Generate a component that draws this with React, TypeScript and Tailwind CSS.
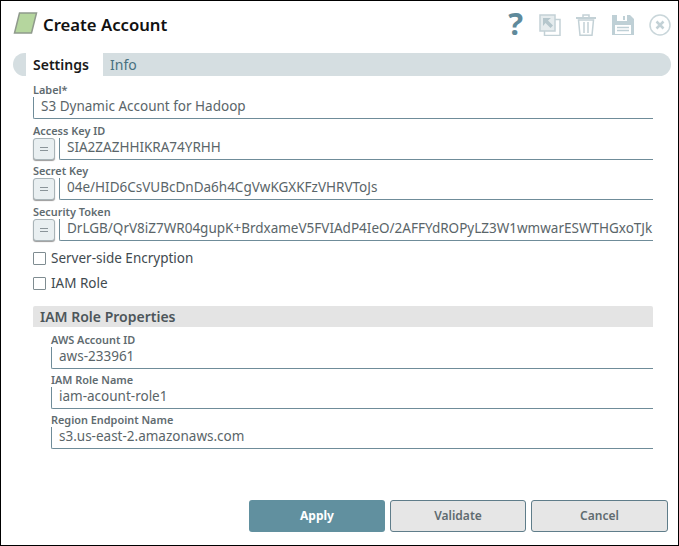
import type { ReactNode } from 'react';

const FONT = "font-['Noto_Sans','Open_Sans',sans-serif]";

function ExprButton() {
  return (
    <div className="mr-[4px] flex h-[22px] w-[22px] shrink-0 items-center justify-center rounded-[3px] border border-[#a9b4b8] bg-[#e9eff1] shadow-[0_1px_1px_#999]">
      <span className="flex flex-col gap-[2px]">
        <span className="block h-[1px] w-[8px] bg-[#8a9499]" />
        <span className="block h-[1px] w-[8px] bg-[#8a9499]" />
      </span>
    </div>
  );
}

function Field({ label, value, expr, className }: { label: string; value: string; expr?: boolean; className: string }) {
  return (
    <div className={className}>
      <div className="h-[15px] text-[10.9px] leading-[15px] font-semibold text-[#5f6b70]">{label}</div>
      <div className="flex items-end">
        {expr ? <ExprButton /> : null}
        <div className="h-[22px] min-w-0 flex-1 overflow-hidden rounded-bl-[2px] border-b border-l border-[#6f8c99] pl-[7px] text-[13.5px] leading-[18px] whitespace-nowrap text-[#5a6569]">
          {value}
        </div>
      </div>
    </div>
  );
}

function Check({ children, className }: { children: ReactNode; className: string }) {
  return (
    <div className={`flex items-center ${className}`}>
      <span className="mr-[5px] h-[13px] w-[13px] rounded-[1px] border border-[#7f8c91] bg-white" />
      <span className="text-[13.5px] leading-[20px] text-[#3f4a4f]">{children}</span>
    </div>
  );
}

function Icons() {
  return (
    <div className="flex items-start">
      <span className="mt-[-9px] mr-[16px] text-[31px] leading-[40px] font-bold text-[#5f8a9b]">?</span>
      <svg width="22" height="22" viewBox="0 0 22 22" className="mt-[2px] mr-[15px]">
        <path d="M5.5 5.5h15.5v16H5.5z" fill="#fff" stroke="#c3d1d6" strokeWidth="1.5" />
        <path d="M1 1h15v16H1z" fill="#e6ecee" stroke="#c3d1d6" strokeWidth="1.5" />
        <path d="M4 4h8l-3 2.5 5 5-2.5 2.5-5-5L4 12z" fill="#b5c6cc" />
      </svg>
      <svg width="20" height="22" viewBox="0 0 20 22" className="mt-[2px] mr-[16px]">
        <path d="M0 4h20" stroke="#c3d1d6" strokeWidth="2" />
        <path d="M7 3V1h6v2" fill="none" stroke="#c3d1d6" strokeWidth="1.5" />
        <path d="M2.5 6l1.5 15.2h12L17.5 6z" fill="none" stroke="#c3d1d6" strokeWidth="1.5" />
        <path d="M8 8v11M12 8v11" stroke="#c3d1d6" strokeWidth="1.5" />
      </svg>
      <svg width="22" height="22" viewBox="0 0 22 22" className="mt-[2px] mr-[15px]">
        <path d="M0 1h18l4 4v16H0z" fill="#bfd0d6" />
        <path d="M5 1h10v6H5z" fill="#fff" />
        <path d="M11 2h2v4h-2z" fill="#bfd0d6" />
        <path d="M3 11h16v9H3z" fill="#fff" />
        <path d="M5 13.5h12M5 16.5h12" stroke="#bfd0d6" strokeWidth="1.5" />
      </svg>
      <svg width="22" height="22" viewBox="0 0 22 22" className="mt-[2px]">
        <circle cx="11" cy="11" r="10" fill="#fff" stroke="#c9d6da" strokeWidth="1.5" />
        <path d="M7.5 7.5l7 7M14.5 7.5l-7 7" stroke="#c3d1d6" strokeWidth="2.5" />
      </svg>
    </div>
  );
}

export default function App() {
  return (
    <div className={`${FONT} flex h-[546px] w-[679px] flex-col border border-black bg-white`}>
      <div className="flex h-[52px] items-start justify-between pt-[11px] pr-[7px] pl-[12px]">
        <div className="flex items-start">
          <svg width="25" height="22" viewBox="0 0 25 22" className="mr-[5px]">
            <path d="M6.5 1H23.5L18.5 21H1.5z" fill="#b5d69e" stroke="#8f9a8c" strokeWidth="1.5" />
          </svg>
          <span className="mt-[2px] text-[16.7px] leading-[22px] font-semibold text-[#111]">Create Account</span>
        </div>
        <Icons />
      </div>

      <div className="mr-[7px] ml-[12px] flex h-[23px] rounded-full bg-[#d5dee1]">
        <div className="ml-[13px] flex w-[77px] items-center bg-white pl-[7px] text-[14px] font-semibold text-[#1a1a1a]">
          Settings
        </div>
        <div className="flex items-center pl-[7px] text-[14px] text-[#49707f]">Info</div>
      </div>

      <div className="mr-[25px] ml-[32px] flex flex-col">
        <Field label="Label*" value="S3 Dynamic Account for Hadoop" className="mt-[6px]" />
        <Field label="Access Key ID" value="SIA2ZAZHHIKRA74YRHH" expr className="mt-[4px]" />
        <Field label="Secret Key" value="04e/HID6CsVUBcDnDa6h4CgVwKGXKFzVHRVToJs" expr className="mt-[3px]" />
        <Field
          label="Security Token"
          value="DrLGB/QrV8iZ7WR04gupK+BrdxameV5FVIAdP4IeO/2AFFYdROPyLZ3W1wmwarESWTHGxoTJk"
          expr
          className="mt-[4px]"
        />
        <Check className="mt-[7px]">Server-side Encryption</Check>
        <Check className="mt-[5px]">IAM Role</Check>

        <div className="mt-[13px] h-[21px] rounded-t-[2px] bg-[#e4e4e4] pl-[7px] text-[14px] leading-[21px] font-semibold text-[#4d565a]">
          IAM Role Properties
        </div>
        <div className="flex flex-col pl-[18px]">
          <Field label="AWS Account ID" value="aws-233961" className="mt-[5px]" />
          <Field label="IAM Role Name" value="iam-acount-role1" className="mt-[3px]" />
          <Field label="Region Endpoint Name" value="s3.us-east-2.amazonaws.com" className="mt-[3px]" />
        </div>
      </div>

      <div className="mt-auto mr-[10px] mb-[13px] flex justify-end gap-[5px]">
        <button className="h-[32px] w-[136px] rounded-[3px] bg-[#61909f] text-[12px] font-bold text-white">Apply</button>
        <button className="h-[32px] w-[136px] rounded-[3px] border border-[#5f7d8a] bg-[#e6e6e6] text-[12px] font-semibold text-[#5f6b70]">
          Validate
        </button>
        <button className="h-[32px] w-[137px] rounded-[3px] border border-[#5f7d8a] bg-[#e6e6e6] text-[12px] font-semibold text-[#5f6b70]">
          Cancel
        </button>
      </div>
    </div>
  );
}
